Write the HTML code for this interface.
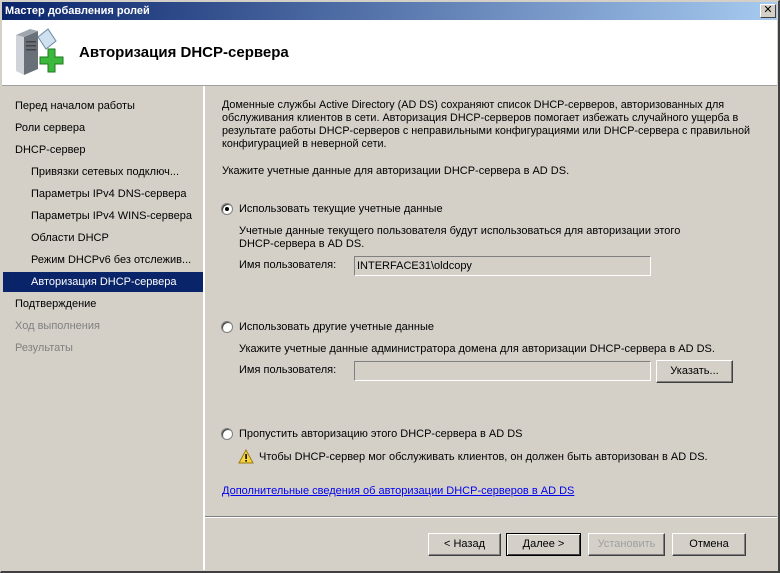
<!DOCTYPE html>
<html><head><meta charset="utf-8"><style>
*{margin:0;padding:0;box-sizing:border-box}
body{width:780px;height:573px;overflow:hidden;background:#d4d0c8;font-family:"Liberation Sans","DejaVu Sans",sans-serif;font-size:11px;color:#000;position:relative}
.abs{position:absolute}
.win{left:0;top:0;width:780px;height:573px;border:1px solid #d4d0c8;border-right:2px solid #404040;border-bottom:2px solid #404040}
.title{left:2px;top:2px;width:775px;height:18px;background:linear-gradient(to right,#0a246a,#a6caf0);color:#fff;font-weight:bold;font-size:11px;line-height:18px;padding-left:3px}
.close{right:4px;top:4px;width:16px;height:14px;background:#d4d0c8;border:1px solid;border-color:#fff #404040 #404040 #fff;font-size:11px;line-height:11px;text-align:center;color:#000;font-weight:bold}
.head{left:2px;top:20px;width:775px;height:65px;background:#fff}
.nav{left:3px;top:88px;width:200px;height:483px}
.nav div{position:absolute;left:0;width:200px;height:20px;line-height:20px;padding-left:12px}
.sub{padding-left:28px!important}
.sel{background:#0a246a;color:#fff}
.dis{color:#808080}
p.t{position:absolute;white-space:nowrap}
.edit{border:1px solid;border-color:#808080 #fff #fff #808080;background:#d4d0c8;height:20px;line-height:18px;padding-left:2px}
.btn{position:absolute;height:23px;background:#d4d0c8;border:1px solid;border-color:#fff #404040 #404040 #fff;text-align:center;line-height:21px;box-shadow:inset -1px -1px 0 #808080}
.radio{position:absolute;width:12px;height:12px;border-radius:50%;background:#fff;border:1px solid #808080;box-shadow:inset 1px 1px 0 #404040}
</style></head><body>
<div class="abs win"></div>
<div class="abs title">Мастер добавления ролей</div>
<div class="abs close">✕</div>
<div class="abs head">
<svg class="abs" style="left:12px;top:5px" width="52" height="52" viewBox="0 0 52 52">
<path d="M2 10 L10 12 L10 50 L2 46Z" fill="#d0d4da"/>
<path d="M10 12 L24 6 L24 44 L10 50Z" fill="#6a7078"/>
<path d="M2 10 L16 4 L24 6 L10 12Z" fill="#a0a6ae"/>
<rect x="12" y="16" width="10" height="1.5" fill="#444"/><rect x="12" y="20" width="10" height="1.5" fill="#444"/><rect x="12" y="24" width="10" height="1.5" fill="#444"/>
<path d="M24 12 L34 4 L42 16 L32 24Z" fill="#cfe0ee" stroke="#6a8aa8"/>
<path d="M26 32 h8 v-8 h7 v8 h8 v7 h-8 v8 h-7 v-8 h-8z" fill="#3cb83c" stroke="#1e7a1e"/>
</svg>
<div class="abs" style="left:77px;top:24px;font-size:15px;font-weight:bold">Авторизация DHCP-сервера</div>
</div>
<div class="abs" style="left:2px;top:85px;width:775px;height:1px;background:#a0a0a0"></div>
<div class="abs nav">
<div style="top:8px">Перед началом работы</div>
<div style="top:30px">Роли сервера</div>
<div style="top:52px">DHCP-сервер</div>
<div class="sub" style="top:74px">Привязки сетевых подключ...</div>
<div class="sub" style="top:96px">Параметры IPv4 DNS-сервера</div>
<div class="sub" style="top:118px">Параметры IPv4 WINS-сервера</div>
<div class="sub" style="top:140px">Области DHCP</div>
<div class="sub" style="top:162px">Режим DHCPv6 без отслежив...</div>
<div class="sub sel" style="top:184px">Авторизация DHCP-сервера</div>
<div style="top:206px">Подтверждение</div>
<div class="dis" style="top:228px">Ход выполнения</div>
<div class="dis" style="top:250px">Результаты</div>
</div>
<div class="abs" style="left:203px;top:86px;width:2px;height:484px;background:#fff"></div>
<p class="t" style="left:222px;top:99px;line-height:13px;font-size:10.8px">Доменные службы Active Directory (AD DS) сохраняют список DHCP-серверов, авторизованных для<br>обслуживания клиентов в сети. Авторизация DHCP-серверов помогает избежать случайного ущерба в<br>результате работы DHCP-серверов с неправильными конфигурациями или DHCP-сервера с правильной<br>конфигурацией в неверной сети.</p>
<p class="t" style="left:222px;top:165px">Укажите учетные данные для авторизации DHCP-сервера в AD DS.</p>
<div class="radio" style="left:221px;top:203px"><div style="position:absolute;left:3px;top:3px;width:4px;height:4px;background:#000;border-radius:50%"></div></div>
<p class="t" style="left:239px;top:203px">Использовать текущие учетные данные</p>
<p class="t" style="left:239px;top:225px;line-height:13px">Учетные данные текущего пользователя будут использоваться для авторизации этого<br>DHCP-сервера в AD DS.</p>
<p class="t" style="left:239px;top:259px">Имя пользователя:</p>
<div class="abs edit" style="left:354px;top:256px;width:297px">INTERFACE31\oldcopy</div>
<div class="radio" style="left:221px;top:321px"></div>
<p class="t" style="left:239px;top:321px">Использовать другие учетные данные</p>
<p class="t" style="left:239px;top:343px">Укажите учетные данные администратора домена для авторизации DHCP-сервера в AD DS.</p>
<p class="t" style="left:239px;top:364px">Имя пользователя:</p>
<div class="abs edit" style="left:354px;top:361px;width:297px"></div>
<div class="btn" style="left:656px;top:360px;width:77px">Указать...</div>
<div class="radio" style="left:221px;top:428px"></div>
<p class="t" style="left:239px;top:428px">Пропустить авторизацию этого DHCP-сервера в AD DS</p>
<svg class="abs" style="left:238px;top:449px" width="16" height="15"><path d="M8 1 L15 14 L1 14Z" fill="#f6d43c" stroke="#9a7a10"/><rect x="7.3" y="5" width="1.6" height="5" fill="#000"/><rect x="7.3" y="11" width="1.6" height="1.6" fill="#000"/></svg>
<p class="t" style="left:259px;top:451px">Чтобы DHCP-сервер мог обслуживать клиентов, он должен быть авторизован в AD DS.</p>
<p class="t" style="left:222px;top:485px;color:#0000ee;text-decoration:underline">Дополнительные сведения об авторизации DHCP-серверов в AD DS</p>
<div class="abs" style="left:205px;top:516px;width:572px;height:1px;background:#808080"></div>
<div class="abs" style="left:205px;top:517px;width:572px;height:1px;background:#fff"></div>
<div class="btn" style="left:428px;top:533px;width:73px">&lt; Назад</div>
<div class="btn" style="left:506px;top:533px;width:75px;border:1px solid #000;box-shadow:inset 1px 1px 0 #fff,inset -1px -1px 0 #404040">Далее &gt;</div>
<div class="btn" style="left:588px;top:533px;width:77px;color:#a0a0a0">Установить</div>
<div class="btn" style="left:672px;top:533px;width:74px">Отмена</div>
</body></html>
